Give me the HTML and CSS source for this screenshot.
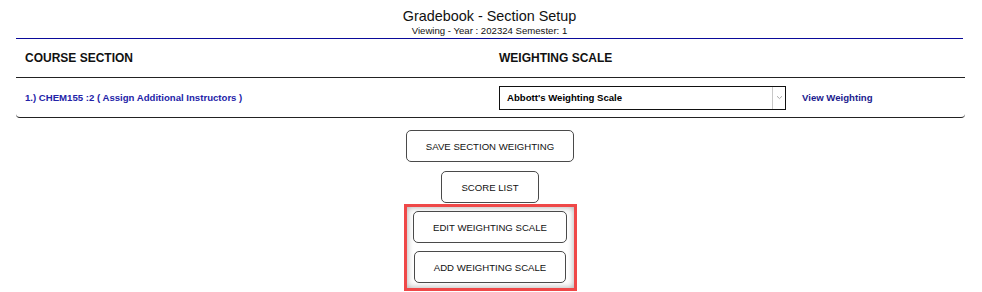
FILE: index.html
```html
<!DOCTYPE html>
<html>
<head>
    <title>Gradebook - Section Setup</title>
    <link rel="stylesheet" href="styles.css">
</head>
<body>
    <div class="page">
        <div class="page-head">
            <h1 class="title">Gradebook - Section Setup</h1>
            <p class="subtitle">Viewing - Year : 202324 Semester: 1</p>
        </div>

        <div class="section-table">
            <div class="cell head">COURSE SECTION</div>
            <div class="cell head">WEIGHTING SCALE</div>

            <div class="cell row">
                <a class="course-link" href="#">1.) CHEM155 :2 ( Assign Additional Instructors )</a>
            </div>
            <div class="cell row">
                <div class="select">
                    <span class="select-value">Abbott's Weighting Scale</span>
                    <span class="select-arrow">
                        <svg width="7" height="5" viewBox="0 0 7 5"><path d="M1 1.2 L3.5 3.6 L6 1.2" fill="none" stroke="#aaa" stroke-width="1"/></svg>
                    </span>
                </div>
                <a class="view-link" href="#">View Weighting</a>
            </div>
        </div>

        <div class="actions">
            <button class="btn">SAVE SECTION WEIGHTING</button>
            <button class="btn">SCORE LIST</button>
            <div class="highlight">
                <button class="btn">EDIT WEIGHTING SCALE</button>
                <button class="btn">ADD WEIGHTING SCALE</button>
            </div>
        </div>
    </div>
</body>
</html>
```

FILE: styles.css
```css
*, *::before, *::after { padding: 0; margin: 0; box-sizing: border-box; }
body { font-family: 'Liberation Sans', Arial, sans-serif; color: #111; background: #fff; }
.page { margin: 0 17px 0 16px; }

/* header */
.page-head { text-align: center; padding: 8px 0 2px; border-bottom: 1px solid #0a0a9a; margin-right: 2px; }
.title { font-size: 14.4px; line-height: 17px; font-weight: normal; }
.subtitle { font-size: 9.6px; line-height: 11px; }

/* section table */
.section-table { display: grid; grid-template-columns: 474px 1fr; border-bottom: 1px solid #222; border-radius: 0 0 4px 4px; }
.cell { display: flex; align-items: center; padding-left: 9px; }
.cell.head { height: 39px; font-size: 12px; font-weight: bold; border-bottom: 1px solid #222; }
.cell.row { height: 39px; font-size: 9.6px; font-weight: bold; }
.course-link { color: #2323a8; text-decoration: none; }
.view-link { color: #1b1b8e; text-decoration: none; margin-left: 16px; }

.select { display: flex; width: 287px; height: 24px; border: 1px solid #111; background: #fff; }
.select-value { flex: 1; display: flex; align-items: center; padding-left: 7px; color: #000; }
.select-arrow { width: 13px; display: flex; align-items: center; justify-content: center; border-left: 1px solid #c8c8c8; }

/* buttons */
.actions { display: flex; flex-direction: column; align-items: center; gap: 9px; margin-top: 12px; padding-right: 1px; }
.btn { height: 32px; padding: 0 19px; background: #fff; border: 1px solid #4a4a4a; border-radius: 5px; font-family: inherit; font-size: 9.6px; color: #111; }
.highlight { display: flex; flex-direction: column; align-items: center; gap: 8px; width: 173px; padding: 4px 5px 5px; border: 3px solid #ef4848; box-shadow: inset 0 0 6px rgba(0, 0, 0, .35); margin-top: -8px; }
```
